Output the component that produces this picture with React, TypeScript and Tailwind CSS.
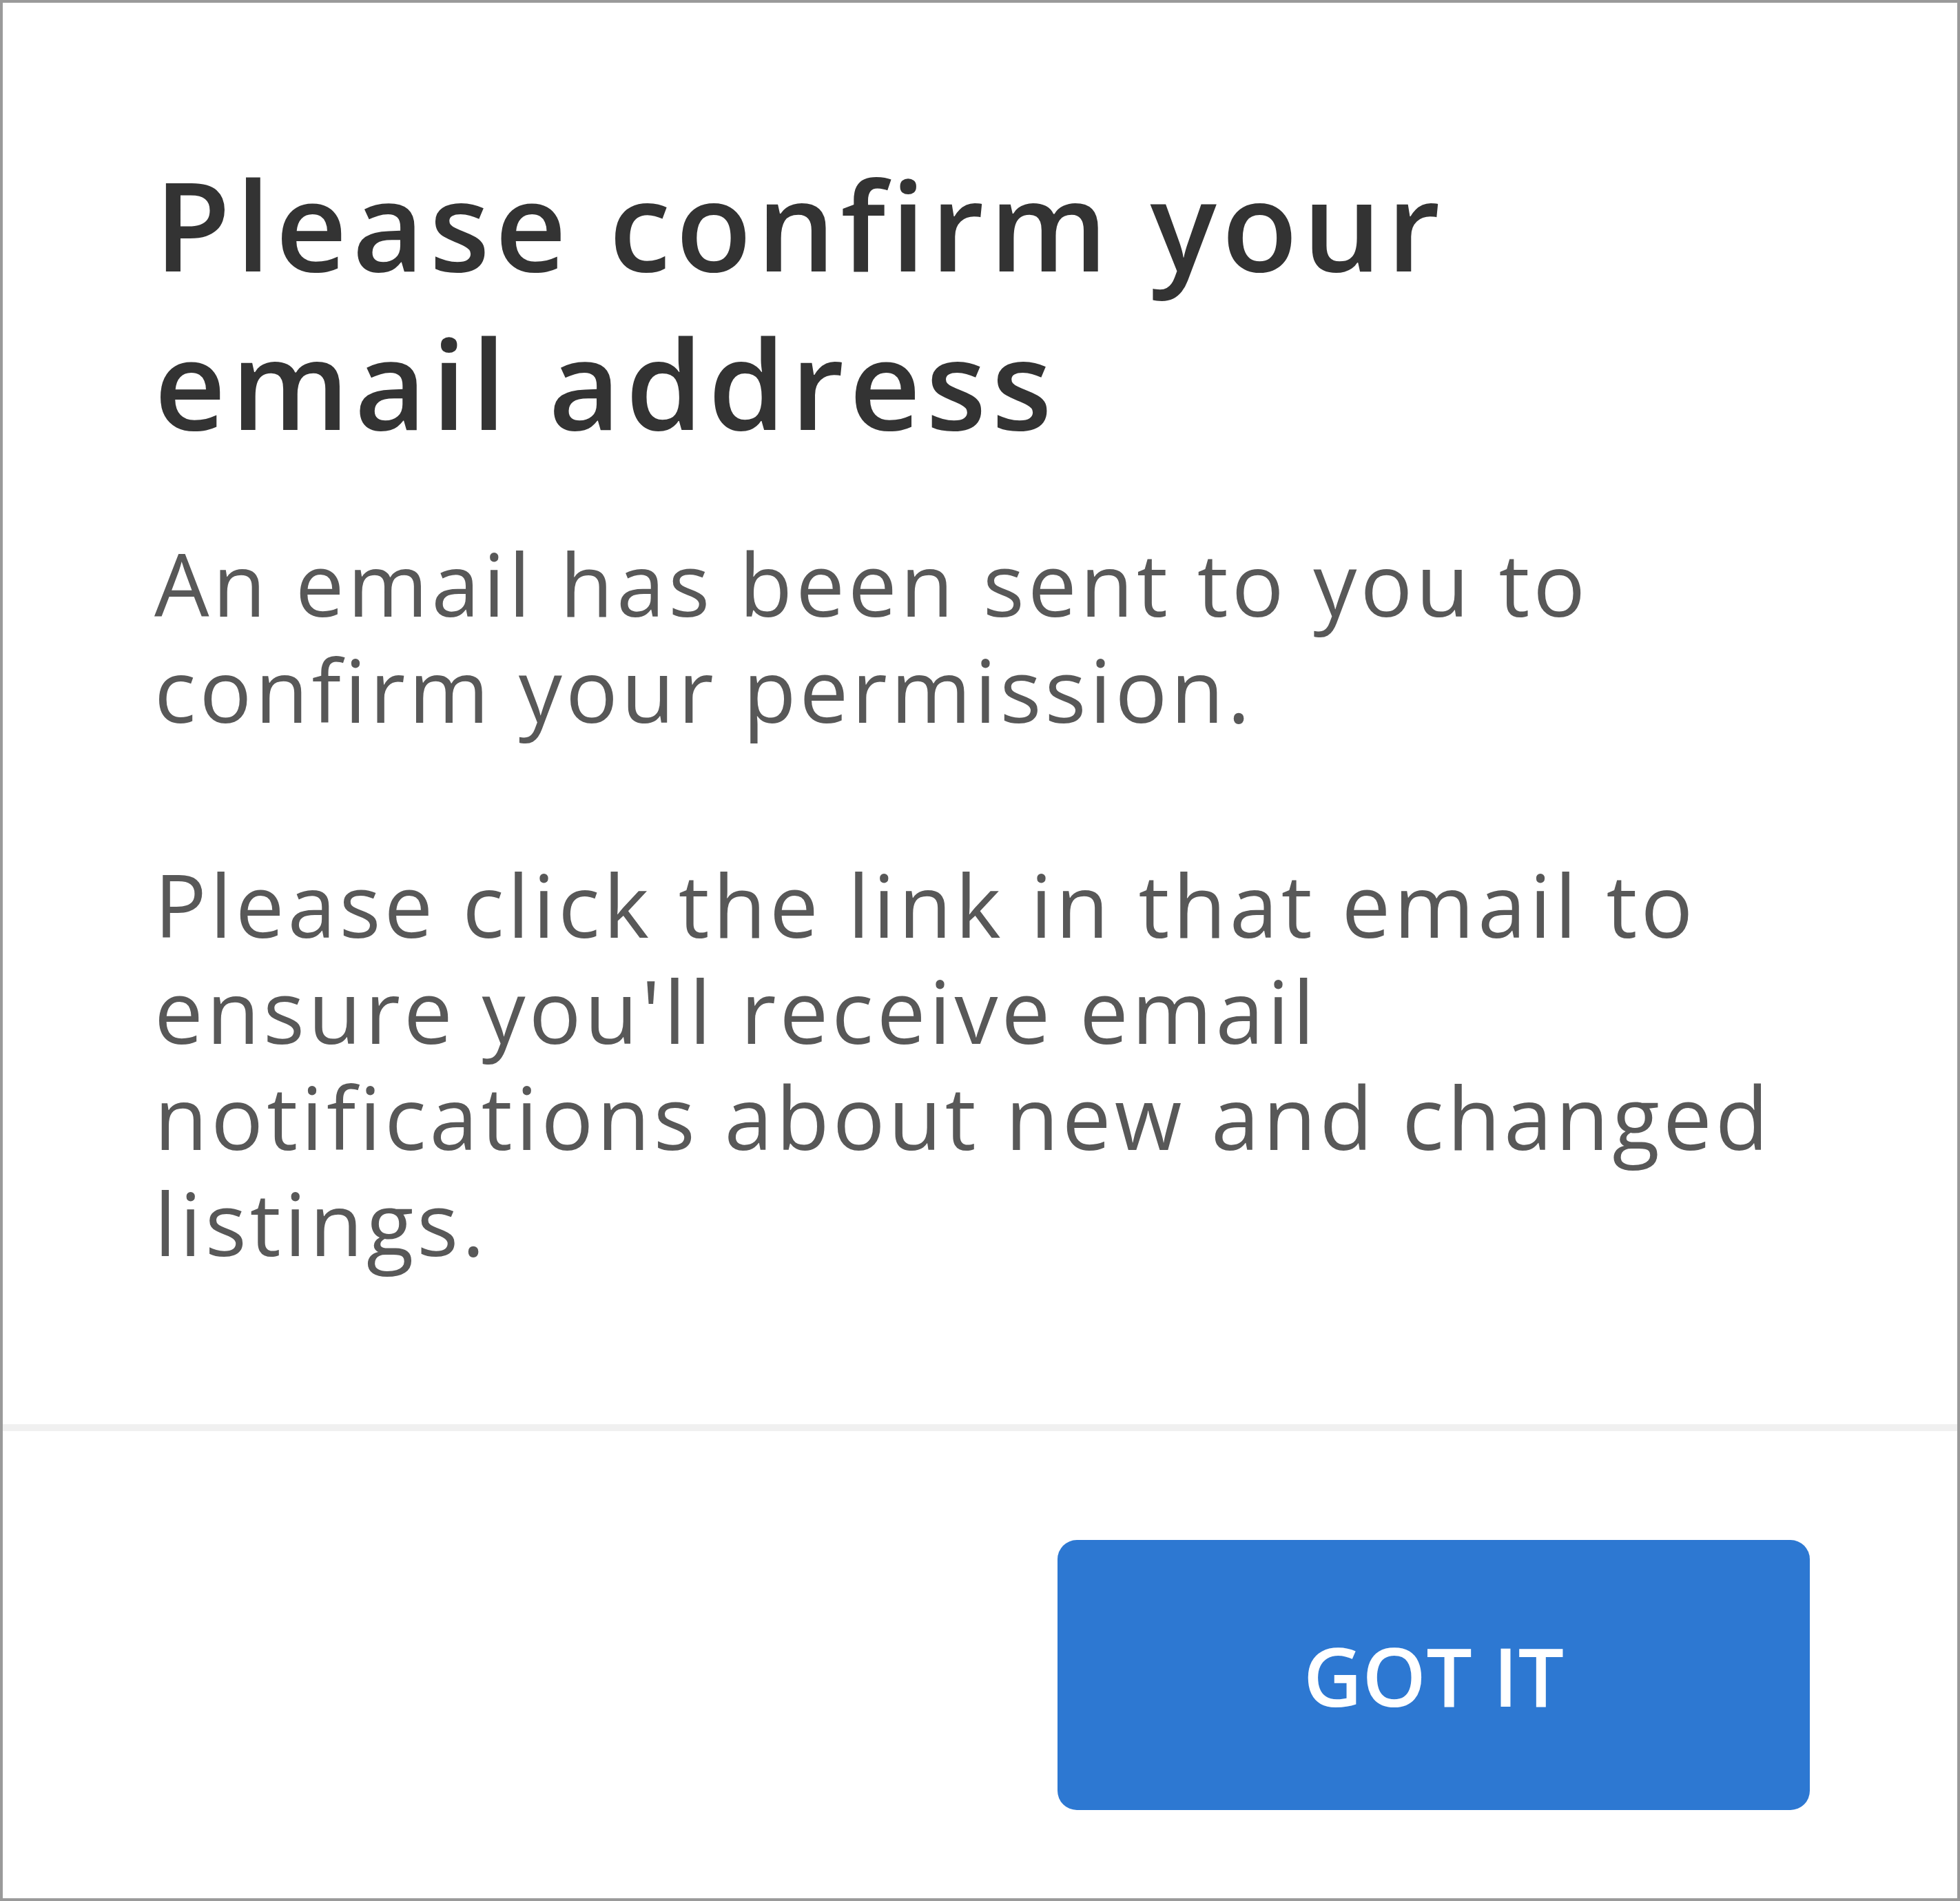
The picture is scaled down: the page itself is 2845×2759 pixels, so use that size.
import React from 'react';

const App: React.FC = () => {
  return (
    <div className="w-[2845px] h-[2759px] bg-white border-[4px] border-[#9a9a9a] flex flex-col font-['Open_Sans',sans-serif]">
      <div className="flex-1 px-[220px] pt-[206px] pb-[216px]">
        <h2 className="text-[180px] leading-[230px] font-semibold tracking-[0.042em] text-[#333333]">
          Please confirm your
          <br />
          email address
        </h2>
        <div className="mt-[99px] text-[126px] leading-[154px] tracking-[0.04em] text-[#585858]">
          <p>
            An email has been sent to you to
            <br />
            confirm your permission.
          </p>
          <p className="mt-[158px]">
            Please click the link in that email to
            <br />
            ensure you'll receive email
            <br />
            notifications about new and changed
            <br />
            listings.
          </p>
        </div>
      </div>

      <div className="h-[20px] border-y-[5px] border-[#f0f0f0] bg-[#dcdcdc]" />

      <div className="flex justify-end pt-[158px] pb-[130px] pr-[214px]">
        <button
          type="button"
          className="w-[1092px] h-[392px] rounded-[28px] bg-[#2d78d2] text-white text-[118px] font-semibold flex items-center justify-center"
        >
          GOT IT
        </button>
      </div>
    </div>
  );
};

export default App;
